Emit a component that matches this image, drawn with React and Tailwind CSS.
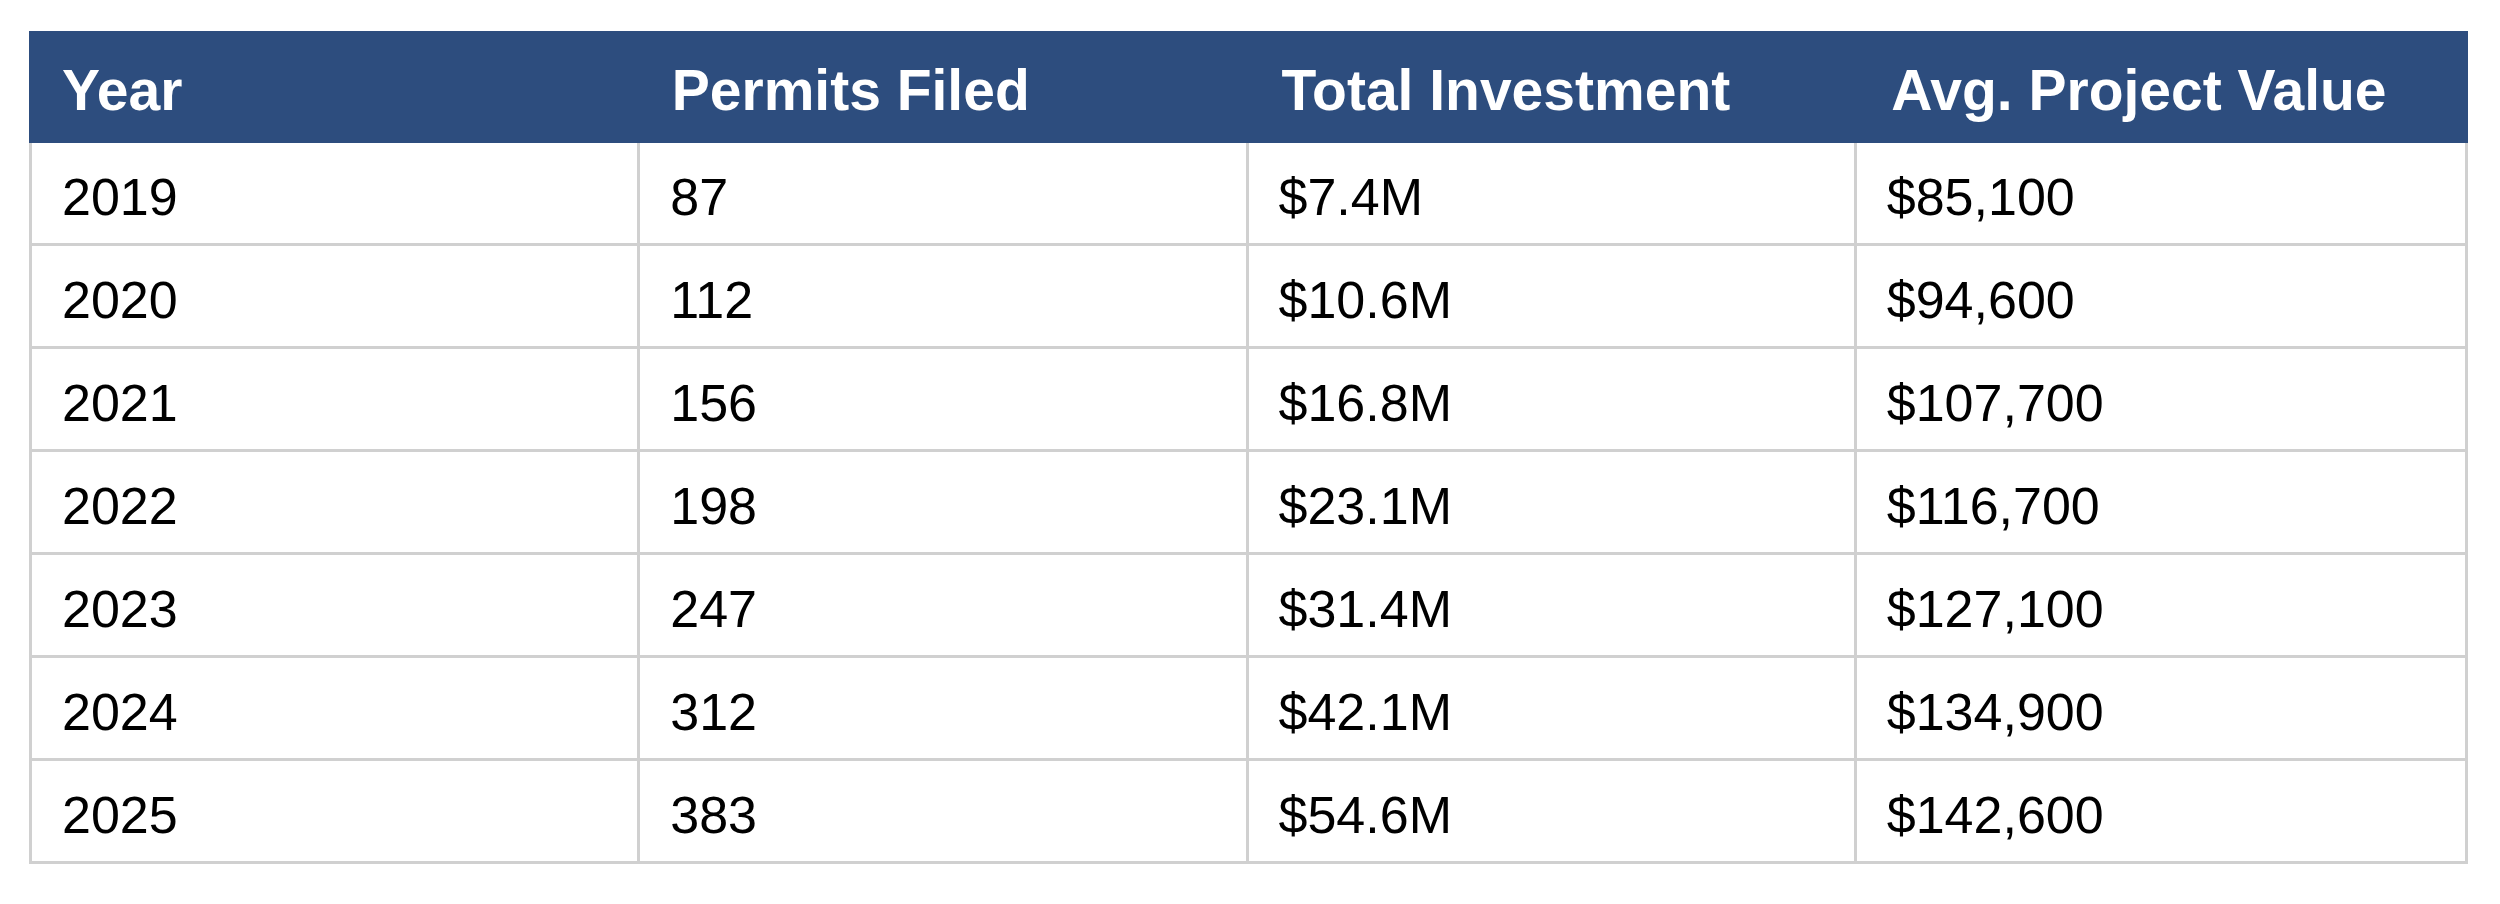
const headers = ['Year', 'Permits Filed', 'Total Investment', 'Avg. Project Value']

const rows = [
  ['2019', '87', '$7.4M', '$85,100'],
  ['2020', '112', '$10.6M', '$94,600'],
  ['2021', '156', '$16.8M', '$107,700'],
  ['2022', '198', '$23.1M', '$116,700'],
  ['2023', '247', '$31.4M', '$127,100'],
  ['2024', '312', '$42.1M', '$134,900'],
  ['2025', '383', '$54.6M', '$142,600'],
]

export default function App() {
  return (
    <div className="min-h-[904px] w-full bg-white pl-[29px] pt-[31px]" style={{ fontFamily: '"Liberation Sans", Arial, sans-serif' }}>
      <div className="w-[2439px]">
        <div className="grid h-[112px] grid-cols-4 bg-[#2d4d7e]">
          {headers.map((h) => (
            <div key={h} className="flex items-center pl-[33px] pt-[8px] text-[57px] font-bold text-white">
              {h}
            </div>
          ))}
        </div>
        <div className="border-x-[3px] border-[#d0d0d0]">
          {rows.map((r) => (
            <div key={r[0]} className="grid h-[103px] grid-cols-4 border-b-[3px] border-[#d0d0d0]">
              {r.map((c, i) => (
                <div
                  key={i}
                  className={
                    'flex items-center pl-[30px] pt-[8px] text-[52px] text-black ' +
                    (i < 3 ? 'border-r-[3px] border-[#d0d0d0]' : '')
                  }
                >
                  {c}
                </div>
              ))}
            </div>
          ))}
        </div>
      </div>
    </div>
  )
}
